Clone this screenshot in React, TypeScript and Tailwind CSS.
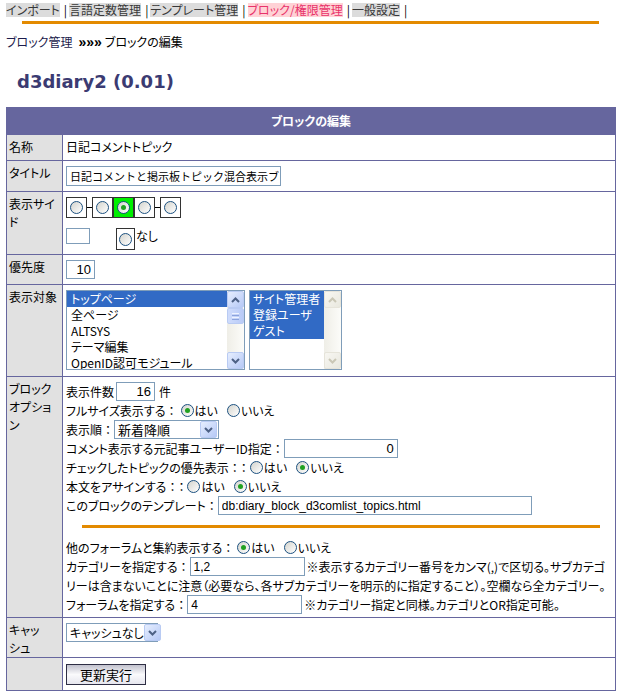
import type { ReactNode } from "react";

const NAV = [
  { name: "インポート" },
  { name: "言語定数管理" },
  { name: "テンプレート管理" },
  { name: "ブロック/権限管理", current: true },
  { name: "一般設定" },
];

const TARGETS = ["トップページ", "全ページ", "ALTSYS", "テーマ編集", "OpenID認可モジュール"];
const GROUPS = ["サイト管理者", "登録ユーザ", "ゲスト"];

function Radio({ checked = false }: { checked?: boolean }) {
  return (
    <span className="inline-flex h-[13px] w-[13px] shrink-0 items-center justify-center rounded-full border border-[#1c5180] bg-gradient-to-br from-[#d4d4ce] to-white">
      {checked && <span className="h-[5px] w-[5px] rounded-full bg-[#21a121]" />}
    </span>
  );
}

// full-width colon, kept at full width (palt would halve it)
const Colon = () => <span className="[font-feature-settings:normal]">：</span>;

function ArrowBtn({ up = false, disabled = false }: { up?: boolean; disabled?: boolean }) {
  return (
    <span
      className={
        disabled
          ? "flex h-[17px] w-[17px] shrink-0 items-center justify-center rounded-[2px] border border-[#e6e4da] bg-gradient-to-br from-[#f8f7f2] to-[#e9e8df]"
          : "flex h-[17px] w-[17px] shrink-0 items-center justify-center rounded-[2px] border border-[#b9cbf3] bg-gradient-to-br from-[#e6eefe] to-[#b6c9f6]"
      }
    >
      <svg width="9" height="6" viewBox="0 0 9 6">
        <path
          d={up ? "M1 5 L4.5 1.5 L8 5" : "M1 1 L4.5 4.5 L8 1"}
          stroke={disabled ? "#cac7b6" : "#4d6185"}
          strokeWidth="2"
          fill="none"
        />
      </svg>
    </span>
  );
}

function Scrollbar({ disabled = false }: { disabled?: boolean }) {
  return (
    <div className="flex h-full w-[17px] shrink-0 flex-col bg-gradient-to-r from-[#efeee7] to-[#fcfcf9]">
      <ArrowBtn up disabled={disabled} />
      {!disabled && (
        <div className="flex h-[16px] w-[17px] flex-col items-center justify-center gap-[1px] rounded-[2px] border border-[#b9cbf3] bg-gradient-to-r from-[#cfdcfc] to-[#b9cbf7]">
          <span className="h-[1px] w-[7px] bg-[#eef3ff]" />
          <span className="h-[1px] w-[7px] bg-[#8ca3dc]" />
          <span className="h-[1px] w-[7px] bg-[#eef3ff]" />
          <span className="h-[1px] w-[7px] bg-[#8ca3dc]" />
        </div>
      )}
      <div className="flex-1" />
      <ArrowBtn disabled={disabled} />
    </div>
  );
}

function Select({ value, className }: { value: string; className: string }) {
  return (
    <div className={`flex h-[19px] items-center justify-between border border-[#7f9db9] bg-white pl-[3px] pr-[1px] ${className}`}>
      <span className="whitespace-nowrap">{value}</span>
      <ArrowBtn />
    </div>
  );
}

function TextBox({ value = "", className = "", right = false }: { value?: string; className?: string; right?: boolean }) {
  return (
    <input
      readOnly
      value={value}
      className={`h-[19px] border border-[#7f9db9] bg-white px-[3px] font-['Liberation_Sans',sans-serif] text-[12px] text-black outline-none ${right ? "text-right" : ""} ${className}`}
    />
  );
}

function YesNo({ yes }: { yes: boolean }) {
  return (
    <span className="inline-flex items-center">
      <span className="ml-[3px]" />
      <Radio checked={yes} />
      <span className="ml-[1px]">はい</span>
      <span className="ml-[9px]" />
      <Radio checked={!yes} />
      <span className="ml-[1px]">いいえ</span>
    </span>
  );
}

function Row({ label, children, className = "" }: { label?: ReactNode; children: ReactNode; className?: string }) {
  return (
    <div className="flex border-t border-[#66669e]">
      <div className="w-[56px] shrink-0 whitespace-nowrap border-r border-[#66669e] bg-[#e1e1e1] pl-[2px] pt-[3px] leading-[18px]">
        {label}
      </div>
      <div className={`flex-1 pl-[3px] ${className}`}>{children}</div>
    </div>
  );
}

function Line({ children }: { children: ReactNode }) {
  return <div className="flex h-[19px] items-center whitespace-nowrap">{children}</div>;
}

export default function App() {
  return (
    <div className="min-h-[699px] w-[621px] bg-white font-['Noto_Sans_CJK_JP',sans-serif] text-[12px] text-black [font-feature-settings:'palt']">
      <nav className="flex h-[17px] items-start pl-[6px] pt-[3px] leading-[14px] text-[#383838]">
        {NAV.map((n) => (
          <span key={n.name} className="flex">
            <span className={n.current ? "bg-[#ffd2d6] text-[#e8336a]" : "bg-[#dcdcdc]"}>{n.name}</span>
            <span className="ml-[4px] mr-[2px] text-black">|</span>
          </span>
        ))}
      </nav>
      <div className="mx-[22px] mt-[4px] h-[3px] bg-[#e38a00]" />

      <div className="mt-[11px] flex items-center pl-[6px] leading-[14px]">
        <span className="text-[#1c1c4c]">ブロック管理</span>
        <b className="ml-[6px] mr-[3px] font-['Liberation_Sans',sans-serif] text-[14px]">»»»</b>
        ブロックの編集
      </div>

      <h1 className="mt-[22px] pl-[17px] font-['DejaVu_Sans',sans-serif] text-[18px] font-bold leading-[22px] text-[#3b3b72]">
        d3diary2 (0.01)
      </h1>

      <div className="ml-[6px] mt-[14px] w-[610px] border border-[#66669e]">
        <div className="flex h-[26px] items-center justify-center bg-[#66669e] font-bold text-white">
          ブロックの編集
        </div>

        <Row label="名称" className="pb-[4px] pt-[3px] leading-[18px]">
          日記コメントトピック
        </Row>

        <Row label="タイトル" className="pb-[5px] pt-[5px]">
          <div className="h-[20px] w-[215px] overflow-hidden whitespace-nowrap border border-[#7f9db9] pl-[3px] text-[11px] leading-[18px] [font-feature-settings:normal]">
            日記コメントと掲示板トピック混合表示ブロック
          </div>
        </Row>

        <Row label={<>表示サイ<br />ド</>} className="pb-[4px] pt-[5px]">
          <div className="flex items-center">
            <span className="flex h-[21px] w-[21px] items-center justify-center border border-[#333]"><Radio /></span>
            <span className="h-[1px] w-[5px] bg-black" />
            <span className="flex h-[21px] w-[21px] items-center justify-center border border-[#333]"><Radio /></span>
            <span className="flex h-[21px] w-[21px] items-center justify-center border border-[#333] bg-[#00f000]"><Radio checked /></span>
            <span className="flex h-[21px] w-[21px] items-center justify-center border border-[#333]"><Radio /></span>
            <span className="h-[1px] w-[5px] bg-black" />
            <span className="flex h-[21px] w-[21px] items-center justify-center border border-[#333]"><Radio /></span>
          </div>
          <div className="mt-[10px] flex items-start">
            <span className="h-[16px] w-[24px] border border-[#7f9db9]" />
            <span className="ml-[26px] flex h-[22px] w-[19px] items-center justify-center border border-[#333]"><Radio /></span>
            <span className="ml-[1px] leading-[16px]">なし</span>
          </div>
        </Row>

        <Row label="優先度" className="pb-[5px] pt-[5px]">
          <TextBox value="10" right className="w-[29px] text-[13px]" />
        </Row>

        <Row label="表示対象" className="pb-[6px] pt-[5px]">
          <div className="flex gap-[4px] text-[12px]">
            <div className="flex h-[80px] w-[179px] border border-[#7f9db9] bg-white">
              <div className="flex-1 overflow-hidden">
                {TARGETS.map((t, i) => (
                  <div key={t} className={`h-[16px] whitespace-nowrap pl-[4px] leading-[16px] ${i === 0 ? "bg-[#316ac5] text-white" : ""}`}>
                    {t}
                  </div>
                ))}
              </div>
              <Scrollbar />
            </div>
            <div className="flex h-[80px] w-[93px] border border-[#7f9db9] bg-white">
              <div className="flex-1 overflow-hidden">
                {GROUPS.map((g) => (
                  <div key={g} className="h-[16px] whitespace-nowrap bg-[#316ac5] pl-[3px] leading-[16px] text-white">
                    {g}
                  </div>
                ))}
              </div>
              <Scrollbar disabled />
            </div>
          </div>
        </Row>

        <Row label={<>ブロック<br />オプショ<br />ン</>} className="pb-[3px] pt-[5px]">
          <Line>
            表示件数
            <TextBox value="16" right className="ml-[2px] w-[39px] text-[13px]" />
            <span className="ml-[4px]">件</span>
          </Line>
          <Line>
            フルサイズ表示する<Colon /><YesNo yes />
          </Line>
          <Line>
            表示順<Colon />
            <Select value="新着降順" className="w-[105px] text-[13px]" />
          </Line>
          <Line>
            コメント表示する元記事ユーザーID指定<Colon />
            <TextBox value="0" right className="w-[114px] text-[13px]" />
          </Line>
          <Line>
            チェックしたトピックの優先表示<Colon />：<YesNo yes={false} />
          </Line>
          <Line>
            本文をアサインする<Colon />：<YesNo yes={false} />
          </Line>
          <Line>
            このブロックのテンプレート<Colon />
            <TextBox value="db:diary_block_d3comlist_topics.html" className="w-[314px]" />
          </Line>
          <div className="mx-auto mb-[10px] mt-[10px] h-[3px] w-[518px] bg-[#e38a00]" />
          <Line>
            他のフォーラムと集約表示する<Colon /><YesNo yes />
          </Line>
          <Line>
            カテゴリーを指定する<Colon />
            <TextBox value="1,2" className="w-[115px]" />
            <span className="ml-[2px]">※表示するカテゴリー番号をカンマ(,)で区切る。サブカテゴ</span>
          </Line>
          <Line>リーは含まないことに注意（必要なら、各サブカテゴリーを明示的に指定すること）。空欄なら全カテゴリー。</Line>
          <Line>
            フォーラムを指定する<Colon />
            <TextBox value="4" className="w-[115px]" />
            <span className="ml-[2px]">※カテゴリー指定と同様。カテゴリとOR指定可能。</span>
          </Line>
        </Row>

        <Row label={<>キャッ<br />シュ</>} className="pb-[2px] pt-[5px]">
          <Select value="キャッシュなし" className="w-[92px] text-[12px]" />
        </Row>

        <Row className="pb-[5px] pt-[6px]">
          <button className="h-[21px] w-[80px] border border-[#2e2e44] bg-gradient-to-b from-[#c2c2ce] via-[#fafafc] to-[#e6e6ee] text-[13px] leading-[19px]">
            更新実行
          </button>
        </Row>
      </div>
    </div>
  );
}
